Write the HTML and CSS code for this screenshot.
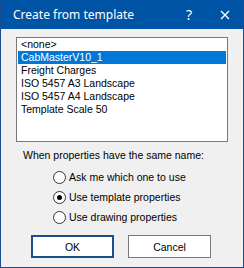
FILE: index.html
```html
<!DOCTYPE html>
<html>
  <head>
    <title>Create from template</title>
    <link rel="stylesheet" href="styles.css">
  </head>
  <body>
    <div class="dialog">
      <div class="titlebar">
        <span class="title">Create from template</span>
        <span class="help">?</span>
        <span class="close">
          <svg width="10" height="10" viewBox="0 0 10 10">
            <path d="M1 1 L9 9 M9 1 L1 9" stroke="#fff" stroke-width="1.4" />
          </svg>
        </span>
      </div>
      <div class="content">
        <ul class="listbox">
          <li>&lt;none&gt;</li>
          <li class="selected">CabMasterV10_1</li>
          <li>Freight Charges</li>
          <li>ISO 5457 A3 Landscape</li>
          <li>ISO 5457 A4 Landscape</li>
          <li>Template Scale 50</li>
        </ul>
        <p class="prompt">When properties have the same name:</p>
        <div class="options">
          <label class="option"><span class="radio"></span>Ask me which one to use</label>
          <label class="option"><span class="radio checked"></span>Use template properties</label>
          <label class="option"><span class="radio"></span>Use drawing properties</label>
        </div>
        <div class="buttons">
          <button class="btn default">OK</button>
          <button class="btn">Cancel</button>
        </div>
      </div>
    </div>
  </body>
</html>
```

FILE: styles.css
```css
body {
  margin: 0;
  font-family: "Liberation Sans", Arial, sans-serif;
  font-size: 10.5px;
  color: #000;
}
.dialog {
  width: 244px;
  height: 268px;
  box-sizing: border-box;
  border: 1px solid #1b4f8c;
  border-top: none;
  background-color: #f0f0f0;
}
.titlebar {
  height: 29px;
  background-color: #0054a6;
  color: #fff;
  display: flex;
  align-items: center;
}
.title {
  font-family: "Noto Sans", sans-serif;
  font-size: 12px;
  margin-left: 12px;
  flex: 1;
}
.help {
  font-family: "Noto Sans", sans-serif;
  font-size: 14px;
  width: 8px;
  margin-right: 26px;
}
.close {
  display: flex;
  margin-right: 13px;
}
.content {
  padding: 8px 0 0 15px;
}
.listbox {
  list-style: none;
  margin: 0;
  padding: 0 1px;
  width: 208px;
  height: 103px;
  background-color: #fff;
  border: 1px solid #7a7a7a;
}
.listbox li {
  height: 13px;
  line-height: 13px;
  padding-left: 3px;
  white-space: nowrap;
}
.listbox li.selected {
  background-color: #0078d7;
  color: #fff;
}
.prompt {
  margin: 7px 0 0 7px;
  line-height: 13px;
}
.options {
  margin: 5px 0 0 37px;
}
.option {
  display: flex;
  align-items: center;
  height: 20px;
}
.radio {
  width: 11px;
  height: 11px;
  border: 1px solid #333;
  border-radius: 50%;
  background-color: #fff;
  margin-right: 3px;
  display: flex;
  align-items: center;
  justify-content: center;
}
.radio.checked::after {
  content: "";
  width: 5px;
  height: 5px;
  border-radius: 50%;
  background-color: #000;
}
.buttons {
  display: flex;
  gap: 14px;
  margin: 8px 0 0 15px;
}
.btn {
  width: 83px;
  height: 23px;
  box-sizing: border-box;
  padding: 0;
  font-family: "Liberation Sans", Arial, sans-serif;
  font-size: 10.5px;
  color: #000;
  background-color: #fff;
  border: 1px solid #7a7a7a;
}
.btn.default {
  border: 2px solid #1b4f8c;
}
```
